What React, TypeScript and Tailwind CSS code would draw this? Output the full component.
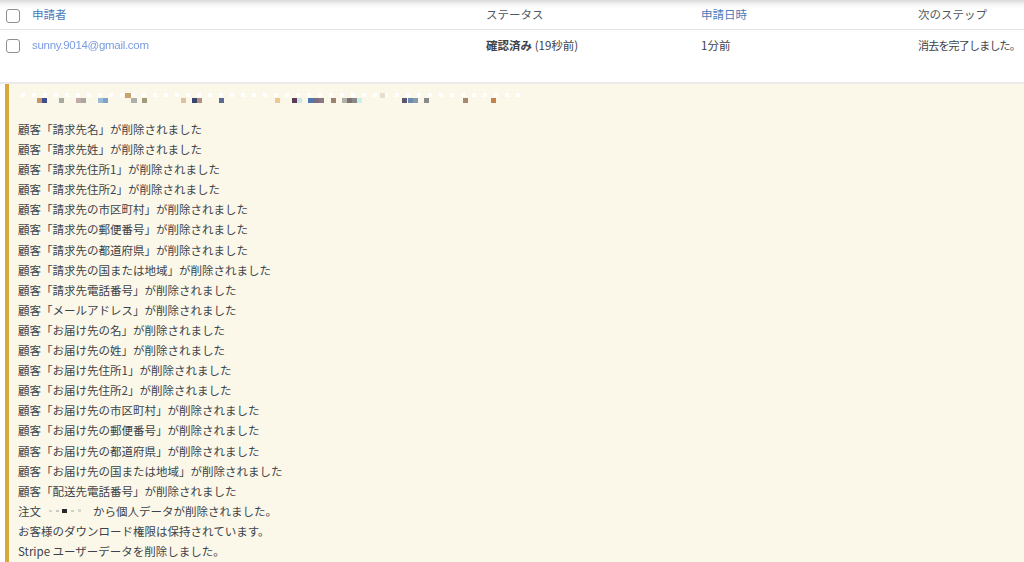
import React from "react";

const FONT = { fontFamily: '"Noto Sans CJK JP", "Noto Sans", sans-serif' };

const lines = [
  "顧客「請求先名」が削除されました",
  "顧客「請求先姓」が削除されました",
  "顧客「請求先住所1」が削除されました",
  "顧客「請求先住所2」が削除されました",
  "顧客「請求先の市区町村」が削除されました",
  "顧客「請求先の郵便番号」が削除されました",
  "顧客「請求先の都道府県」が削除されました",
  "顧客「請求先の国または地域」が削除されました",
  "顧客「請求先電話番号」が削除されました",
  "顧客「メールアドレス」が削除されました",
  "顧客「お届け先の名」が削除されました",
  "顧客「お届け先の姓」が削除されました",
  "顧客「お届け先住所1」が削除されました",
  "顧客「お届け先住所2」が削除されました",
  "顧客「お届け先の市区町村」が削除されました",
  "顧客「お届け先の郵便番号」が削除されました",
  "顧客「お届け先の都道府県」が削除されました",
  "顧客「お届け先の国または地域」が削除されました",
  "顧客「配送先電話番号」が削除されました",
];

const colored: [number, number, number, string][] = [
  [32, 98, 5, "#c8956a"], [37, 98, 5, "#3d4f8f"], [54, 98, 5, "#a8aaa4"],
  [71, 98, 5, "#c2aaa8"], [76, 98, 5, "#a9a6a3"], [93, 98, 5, "#9bbad6"], [98, 98, 5, "#7ea3c6"],
  [120, 93, 6, "#c9a46e"], [126, 98, 6, "#b0b0aa"], [137, 98, 5, "#a19a78"],
  [176, 98, 5, "#dcc2a0"], [187, 98, 5, "#3b4670"], [192, 98, 5, "#b09083"],
  [214, 98, 5, "#5a6a92"], [270, 98, 5, "#ecc992"], [287, 98, 5, "#5c3d55"],
  [292, 98, 5, "#c8e6ec"], [303, 98, 5, "#4d78b0"], [308, 98, 6, "#7d6c80"], [314, 98, 5, "#8a7884"],
  [326, 98, 5, "#9c8270"], [337, 98, 5, "#b0b0aa"], [342, 98, 5, "#7d7272"], [347, 98, 5, "#8a8884"],
  [352, 98, 5, "#c9eeec"], [375, 93, 5, "#e8dccb"], [397, 98, 5, "#5e5570"],
  [403, 98, 5, "#6a8cb0"], [408, 98, 5, "#8a9aa8"], [419, 98, 5, "#8a8a88"],
  [458, 98, 5, "#a58a6e"], [486, 98, 5, "#c4834a"],
];

function Mosaic() {
  const whites = [];
  for (let x = 16; x < 520; x += 11) whites.push(x);
  return (
    <svg width="540" height="35" viewBox="0 84 540 35" className="block">
      {whites.map((x) => (
        <rect key={x} x={x} y={93} width={4} height={4} fill="#ffffff" />
      ))}
      {colored.map(([x, y, w, c], i) => (
        <rect key={i} x={x} y={y} width={w} height={5} fill={c} />
      ))}
    </svg>
  );
}

function Checkbox() {
  return (
    <span className="block w-[14px] h-[14px] rounded-[3px] border border-[#8c8f94] bg-white shrink-0" />
  );
}

export default function App() {
  return (
    <div className="w-[1024px] h-[562px] overflow-hidden bg-white text-[#3c434a] text-[11.5px]" style={FONT}>
      <div className="flex items-center h-[30px] border-b border-[#e2e4e7] bg-[linear-gradient(to_bottom,#d9d9d9_0px,#f4f4f4_4px,#ffffff_9px)] whitespace-nowrap">
        <div className="w-[32px] shrink-0 pl-[6px] pt-[2px] flex"><Checkbox /></div>
        <div className="w-[454px] shrink-0 pt-[1px] text-[#4a7ab8]">申請者</div>
        <div className="w-[215px] shrink-0 pt-[1px] text-[#50575e]">ステータス</div>
        <div className="w-[217px] shrink-0 pt-[1px] text-[#4a7ab8]">申請日時</div>
        <div className="flex-1 pt-[1px] text-[#50575e]">次のステップ</div>
      </div>
      <div className="flex items-start h-[54px] border-b-2 border-[#ebebeb] whitespace-nowrap">
        <div className="w-[32px] shrink-0 pl-[6px] pt-[9px] flex"><Checkbox /></div>
        <div className="w-[454px] shrink-0 pt-[7px] text-[#7a9be0] blur-[0.7px] tracking-[-0.3px]" style={{ fontFamily: '"Liberation Sans", sans-serif', fontSize: 11.5 }}>sunny.9014@gmail.com</div>
        <div className="w-[215px] shrink-0 pt-[7px] font-bold text-[#3c434a]">確認済み <span className="font-normal">(19秒前)</span></div>
        <div className="w-[217px] shrink-0 pt-[7px]">1分前</div>
        <div className="flex-1 pt-[7px] text-[11px] tracking-[-0.8px]">消去を完了しました。</div>
      </div>
      <div className="ml-[5px] border-l-4 border-[#d6a93a] bg-[#fbf8e9] h-[500px] pl-[9px]">
        <div className="h-[35px] -ml-[13px]">
          <Mosaic />
        </div>
        <div className="flex flex-col leading-[20.1px]">
          {lines.map((l) => (
            <div key={l}>{l}</div>
          ))}
          <div className="flex items-center">
            注文
            <svg width="40" height="10" className="mx-[6px] blur-[0.4px]">
              <rect x="2" y="4" width="3" height="2" fill="#d5d5d0" />
              <rect x="9" y="4" width="3" height="2" fill="#c8c8c4" />
              <rect x="15" y="3" width="5" height="4" fill="#2a2a2a" />
              <rect x="24" y="4" width="3" height="2" fill="#cfcfca" />
              <rect x="31" y="3" width="3" height="3" fill="#d8d8d2" />
            </svg>
            から個人データが削除されました。
          </div>
          <div>お客様のダウンロード権限は保持されています。</div>
          <div>Stripe ユーザーデータを削除しました。</div>
        </div>
      </div>
    </div>
  );
}
